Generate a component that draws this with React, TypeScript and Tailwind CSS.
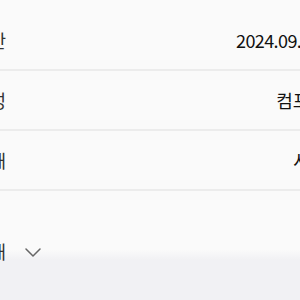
const rows = [
  { label: '기간', value: '2024.09.30', numeric: true },
  { label: '구성', value: '컴포즈', numeric: false },
  { label: '상태', value: '서울', numeric: false },
];

export default function App() {
  return (
    <div
      className="relative w-[300px] h-[300px] overflow-hidden bg-[#fafafa]"
      style={{ fontFamily: '"Noto Sans CJK KR", "Noto Sans", sans-serif' }}
    >
      <div className="ml-[-27px] w-[353px] pt-[11px]">
        {rows.map((row) => (
          <div
            key={row.label}
            className="flex h-[60px] items-center justify-between border-b-2 border-[#ececec] text-[18px]"
          >
            <span className="text-[#333333]">{row.label}</span>
            <span className={row.numeric ? 'mr-[6px] tracking-[-0.6px] text-[#111111]' : 'text-[#111111]'}>
              {row.value}
            </span>
          </div>
        ))}

        {/* Expandable section */}
        <div className="relative z-10 mt-[31px] flex h-[58px] items-center text-[18px] text-[#333333]">
          <span>안내</span>
          <svg width="16" height="9" viewBox="0 0 16 9" className="ml-[19px] mt-[2px]" fill="none">
            <polyline points="1,1 8,8 15,1" stroke="#666666" strokeWidth="1.5" strokeLinecap="round" strokeLinejoin="round" />
          </svg>
        </div>
      </div>

      {/* Bottom fade */}
      <div className="pointer-events-none absolute bottom-0 left-0 h-[50px] w-full bg-linear-to-b from-[#fafafa] to-[#f1f1f4] to-[20%]" />
    </div>
  );
}
